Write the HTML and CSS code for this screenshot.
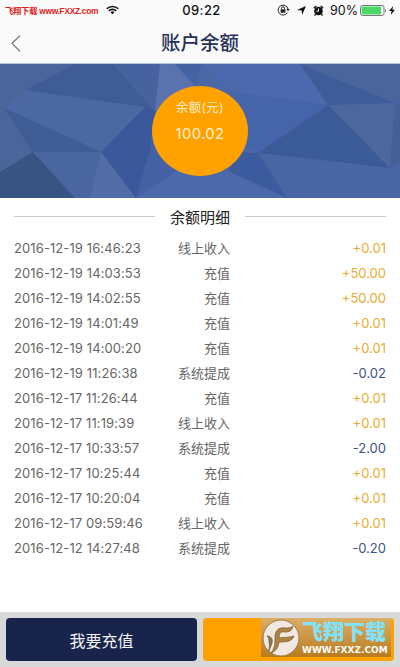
FILE: index.html
```html
<!DOCTYPE html>
<html lang="zh-CN">
<head>
    <meta charset="UTF-8">
    <meta name="viewport" content="width=device-width, initial-scale=1.0">
    <title>账户余额</title>
    <link rel="stylesheet" href="styles.css">
</head>
<body>
    <!-- 顶部状态栏和标题 -->
    <header class="header">
        <div class="status">
            <div class="status-left">
                <span class="site">飞翔下载 www.FXXZ.com</span>
                <svg class="wifi" width="13" height="10" viewBox="0 0 14 10" fill="none" stroke="#111" stroke-width="1.7">
                    <path d="M.8 3.7a8.8 8.8 0 0 1 12.4 0M3 6a5.7 5.7 0 0 1 8 0"/>
                    <path d="M7 9.6 4.9 7.5a3 3 0 0 1 4.2 0z" fill="#111" stroke="none"/>
                </svg>
            </div>
            <span class="time">09:22</span>
            <div class="status-right">
                <svg class="lock" width="13" height="12" viewBox="0 0 13 12" fill="none" stroke="#222">
                    <path d="M10.4 8.7A5 5 0 1 1 11 5"/>
                    <path d="M9.3 5h3.4L11 7.3z" fill="#222" stroke="none"/>
                    <path d="M4.5 5.5V4.3a1.5 1.5 0 0 1 3 0v1.2"/>
                    <path d="M3.6 5.3h4.8v3.4H3.6z" fill="#222" stroke="none"/>
                </svg>
                <svg class="arrow" width="9" height="9" viewBox="0 0 9 9"><path d="M9 0 5.1 9 4.7 4.4 0 4z" fill="#111"/></svg>
                <svg class="alarm" width="11" height="11" viewBox="0 0 11 11">
                    <circle cx="5.5" cy="6" r="4.3" fill="#111"/>
                    <path d="M.8 3.2 3.2 1M10.2 3.2 7.8 1M2.6 9.3l-1 1.2M8.4 9.3l1 1.2" stroke="#111" stroke-width="1.5"/>
                    <path d="M5.5 3.5V6.2H3.4" stroke="#fafafa" fill="none"/>
                </svg>
                <span class="percent">90%</span>
                <svg class="battery" width="27" height="11" viewBox="0 0 27 11">
                    <rect x=".5" y=".5" width="23.5" height="10" rx="2" fill="#fff" stroke="#777"/>
                    <rect x="1.6" y="1.6" width="19.5" height="7.8" rx="1" fill="#4cd864"/>
                    <path d="M25 3.5q1.6 2 0 4z" fill="#555"/>
                </svg>
                <svg class="bolt" width="6" height="9" viewBox="0 0 6 9"><path d="M4.2 0 0 5h2.5L1.7 9 6 3.8H3.4z" fill="#111"/></svg>
            </div>
        </div>
        <div class="nav">
            <svg class="back" width="10" height="17" viewBox="0 0 10 17" fill="none" stroke="#666" stroke-width="1.1"><path d="M9 .7 1 8.3l8 8"/></svg>
            <h1>账户余额</h1>
        </div>
    </header>

    <!-- 余额 -->
    <section class="banner">
        <svg class="banner-bg" width="400" height="134" viewBox="0 0 400 134" preserveAspectRatio="none">
            <rect width="400" height="134" fill="#4a67a6"/>
            <path d="M0 0h75L26 26 4 44l29 44L0 108z" fill="#4a659a"/>
            <path d="M75 0h38l42 47-12-4L26 26z" fill="#3f5c97"/>
            <path d="M113 0h47l-5 47z" fill="#46629f"/>
            <path d="M160 0h15l21 24-41 23z" fill="#5a73ae"/>
            <path d="M175 0h26l-4 22z" fill="#4562a3"/>
            <path d="m4 44 22-17 119 16-44 45z" fill="#4b68a3"/>
            <path d="m4 44 29 44h68z" fill="#3f5c94"/>
            <path d="m0 108 33-20 42 46H0z" fill="#375482"/>
            <path d="M33 88h68l-11 46H75z" fill="#4a66a0"/>
            <path d="m101 88 35 46H90z" fill="#526da8"/>
            <path d="m101 88 44-45 10 4-5 40-14 47z" fill="#3b599a"/>
            <path d="m155 47 50 64-69 23 14-47z" fill="#4461a5"/>
            <path d="m136 134 40-27h55l56 27z" fill="#4c69aa"/>
            <path d="M201 0h99l28 41-95-13z" fill="#4c69ad"/>
            <path d="m233 28 95 13-70 48-20-10z" fill="#4664a9"/>
            <path d="m300 0 95 39-67 2z" fill="#3e5c99"/>
            <path d="M300 0h100v41z" fill="#49659c"/>
            <path d="m328 41-70 48 132 15z" fill="#3b5a98"/>
            <path d="m328 41 67-1-5 64z" fill="#4b679d"/>
            <path d="m395 39 5 2v58l-10 5z" fill="#446096"/>
            <path d="m258 89 132 15 10-5v35H287z" fill="#4965a3"/>
            <path d="m240 88 18 1 29 45-59-27z" fill="#3c5b9e"/>
        </svg>
        <div class="balance">
            <span class="balance-label">余额(元)</span>
            <span class="balance-value">100.02</span>
        </div>
    </section>

    <!-- 余额明细 -->
    <main class="details">
        <h2>余额明细</h2>
        <ul class="list">
            <li><span class="date">2016-12-19 16:46:23</span><span class="type">线上收入</span><span class="sum">+0.01</span></li>
            <li><span class="date">2016-12-19 14:03:53</span><span class="type">充值</span><span class="sum">+50.00</span></li>
            <li><span class="date">2016-12-19 14:02:55</span><span class="type">充值</span><span class="sum">+50.00</span></li>
            <li><span class="date">2016-12-19 14:01:49</span><span class="type">充值</span><span class="sum">+0.01</span></li>
            <li><span class="date">2016-12-19 14:00:20</span><span class="type">充值</span><span class="sum">+0.01</span></li>
            <li><span class="date">2016-12-19 11:26:38</span><span class="type">系统提成</span><span class="sum minus">-0.02</span></li>
            <li><span class="date">2016-12-17 11:26:44</span><span class="type">充值</span><span class="sum">+0.01</span></li>
            <li><span class="date">2016-12-17 11:19:39</span><span class="type">线上收入</span><span class="sum">+0.01</span></li>
            <li><span class="date">2016-12-17 10:33:57</span><span class="type">系统提成</span><span class="sum minus">-2.00</span></li>
            <li><span class="date">2016-12-17 10:25:44</span><span class="type">充值</span><span class="sum">+0.01</span></li>
            <li><span class="date">2016-12-17 10:20:04</span><span class="type">充值</span><span class="sum">+0.01</span></li>
            <li><span class="date">2016-12-17 09:59:46</span><span class="type">线上收入</span><span class="sum">+0.01</span></li>
            <li><span class="date">2016-12-12 14:27:48</span><span class="type">系统提成</span><span class="sum minus">-0.20</span></li>
        </ul>
    </main>

    <!-- 底部按钮 -->
    <footer class="actions">
        <button class="btn btn-dark" type="button">我要充值</button>
        <button class="btn btn-orange" type="button">
            <span class="mark">
                <svg class="mark-logo" width="38" height="38" viewBox="0 0 38 38">
                    <circle cx="19" cy="19" r="18" fill="#f1e9e0" stroke="#9b7a4a"/>
                    <g stroke="#75603f" stroke-width=".8" stroke-linejoin="round">
                        <path d="M9 34c4-5 4-10 4-15 0-8 4-11 10-10 3 0 6 0 8-2-1 5-4 6-8 6-4-1-6 1-6 6 5-1 8 0 15-2-2 5-6 6-15 6-1 6-3 9-8 11z" fill="#b08340"/>
                        <path d="M5 17c4 0 6 3 5 7l-3 8c0-4 1-6 0-9 0-3 0-4-2-6z" fill="#8a7454"/>
                    </g>
                </svg>
                <span class="mark-text">
                    <span class="mark-name">飞翔下载</span>
                    <span class="mark-url">WWW.FXXZ.COM</span>
                </span>
            </span>
        </button>
    </footer>
</body>
</html>
```

FILE: styles.css
```css
/* 通用样式 */
* {
    box-sizing: border-box;
}

body {
    margin: 0;
    height: 667px;
    display: flex;
    flex-direction: column;
    overflow: hidden;
    background-color: #fff;
    color: #666;
    font-family: Inter, "Noto Sans CJK SC", sans-serif;
}

svg {
    display: block;
    flex: none;
}

/* 顶部 */
.header {
    height: 64px;
    background-color: #fafafa;
    border-bottom: 1px solid #b4c0da;
}

.status {
    display: grid;
    grid-template-columns: 1fr auto 1fr;
    align-items: center;
    height: 20px;
    padding: 0 5px;
    color: #111;
}

.status-left,
.status-right {
    display: flex;
    align-items: center;
}

.status-right {
    justify-content: flex-end;
}

.site {
    width: 93px;
    color: #e0201c;
    font-family: "Liberation Sans", "Noto Sans CJK SC", sans-serif;
    font-size: 8.3px;
    font-weight: bold;
    letter-spacing: -0.25px;
    white-space: nowrap;
}

.wifi {
    margin-left: 8px;
}

.time {
    margin-left: 3px;
    font-size: 13px;
    font-weight: 500;
    letter-spacing: 0.4px;
}

.arrow {
    margin-left: 7px;
}

.alarm {
    margin-left: 7px;
}

.percent {
    margin: 0 2px 0 6px;
    font-size: 12.5px;
}

.bolt {
    margin-left: 2px;
}

.nav {
    position: relative;
    height: 43px;
    display: flex;
    align-items: center;
    justify-content: center;
}

.back {
    position: absolute;
    left: 11px;
    top: 15px;
}

h1 {
    margin: 0;
    color: #273058;
    font-size: 19.5px;
    font-weight: 500;
}

/* 余额 */
.banner {
    position: relative;
    height: 134px;
    display: flex;
    justify-content: center;
    padding-top: 22px;
}

.banner-bg {
    position: absolute;
    left: 0;
    top: 0;
}

.balance {
    position: relative;
    width: 96px;
    height: 90px;
    display: flex;
    flex-direction: column;
    align-items: center;
    padding-top: 12px;
    border-radius: 50%;
    background-color: #ffa200;
    color: #fff0cf;
}

.balance-label {
    font-size: 12.3px;
    line-height: 20px;
    letter-spacing: 0.4px;
}

.balance-value {
    margin-top: 6px;
    font-size: 14.8px;
    line-height: 20px;
    letter-spacing: 0.4px;
}

/* 明细 */
.details {
    flex: 1;
    padding: 6px 14px 0;
}

h2 {
    display: flex;
    align-items: center;
    gap: 15px;
    margin: 0;
    height: 25px;
    color: #222;
    font-size: 15px;
    font-weight: 400;
}

h2::before,
h2::after {
    content: "";
    flex: 1;
    height: 1px;
    background-color: #ccc;
}

.list {
    margin: 7px 0 0;
    padding: 0;
    list-style: none;
}

.list li {
    display: grid;
    grid-template-columns: 130px 86px 1fr;
    height: 25px;
    line-height: 25px;
    font-size: 13px;
}

.date {
    letter-spacing: 0.1px;
    white-space: nowrap;
}

.type {
    text-align: right;
}

.sum {
    color: #e9ab30;
    text-align: right;
}

.minus {
    color: #3d5282;
}

/* 底部按钮 */
.actions {
    display: grid;
    grid-template-columns: 1fr 1fr;
    gap: 6px;
    height: 55px;
    padding: 6px;
    background-color: #d9d9d9;
}

.btn {
    height: 43px;
    padding: 0;
    border: none;
    border-radius: 4px;
    font-family: inherit;
    font-size: 16px;
}

.btn-dark {
    background-color: #18244b;
    color: #f2f3f6;
}

.btn-orange {
    display: flex;
    justify-content: flex-end;
    align-items: flex-start;
    padding-right: 3px;
    background-color: #ffa200;
}

.mark {
    display: flex;
    align-items: center;
    gap: 2px;
    width: 130px;
    height: 39px;
    padding-left: 1px;
    background: linear-gradient(#dcae67, #b97b20);
}

.mark-text {
    display: flex;
    flex-direction: column;
    align-items: flex-start;
    white-space: nowrap;
}

.mark-name {
    color: #7fe3fa;
    font-size: 21px;
    font-weight: 900;
    line-height: 24px;
}

.mark-url {
    color: #fff;
    font-family: "DejaVu Sans", sans-serif;
    font-size: 9px;
    font-weight: bold;
    line-height: 12px;
}
```
